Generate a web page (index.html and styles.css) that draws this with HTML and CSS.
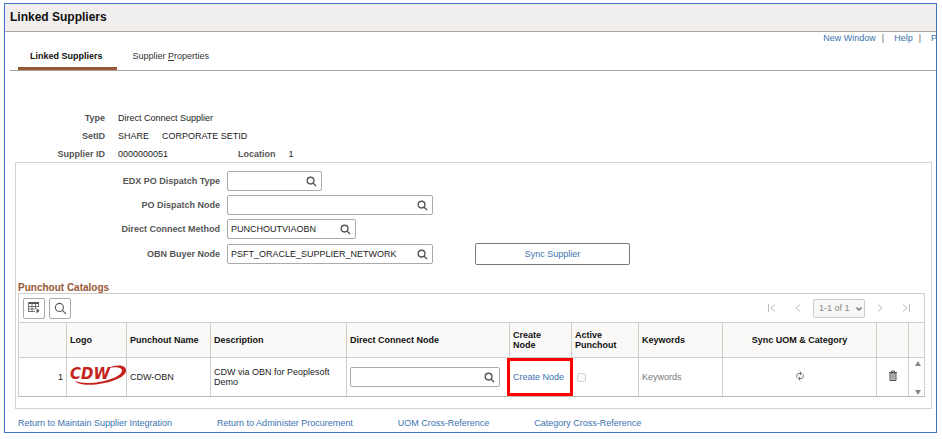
FILE: index.html
```html
<!DOCTYPE html>
<html lang="en">
<head>
<meta charset="utf-8">
<title>Linked Suppliers</title>
<link rel="stylesheet" href="styles.css">
</head>
<body>
<svg class="defs" aria-hidden="true">
  <symbol id="lens" viewBox="0 0 12 12"><circle cx="5" cy="5" r="3.7"/><path d="M7.8 7.8 L11 11"/></symbol>
</svg>
<div class="frame">
  <header class="titlebar"><h1>Linked Suppliers</h1></header>
  <nav class="utility">
    <a href="#">New Window</a><span class="bar">|</span><a href="#">Help</a><span class="bar">|</span><a href="#" class="cut">P</a>
  </nav>
  <nav class="tabs">
    <a href="#" class="tab active">Linked Suppliers</a>
    <a href="#" class="tab">Supplier <u>P</u>roperties</a>
  </nav>

  <dl class="summary">
    <dt>Type</dt><dd>Direct Connect Supplier</dd>
    <dt>SetID</dt><dd><span>SHARE</span><span>CORPORATE SETID</span></dd>
    <dt>Supplier ID</dt><dd><span class="id">0000000051</span><b>Location</b><span>1</span></dd>
  </dl>

  <section class="panel">
    <form class="fields">
      <label for="edx">EDX PO Dispatch Type</label>
      <div class="lookup w-s"><input id="edx" type="text"><button type="button" aria-label="Look up"><svg class="lens"><use href="#lens"/></svg></button></div>
      <label for="pon">PO Dispatch Node</label>
      <div class="lookup w-l"><input id="pon" type="text"><button type="button" aria-label="Look up"><svg class="lens"><use href="#lens"/></svg></button></div>
      <label for="dcm">Direct Connect Method</label>
      <div class="lookup w-m"><input id="dcm" type="text" value="PUNCHOUTVIAOBN"><button type="button" aria-label="Look up"><svg class="lens"><use href="#lens"/></svg></button></div>
      <label for="obn">OBN Buyer Node</label>
      <div class="pair">
        <div class="lookup w-l"><input id="obn" type="text" value="PSFT_ORACLE_SUPPLIER_NETWORK"><button type="button" aria-label="Look up"><svg class="lens"><use href="#lens"/></svg></button></div>
        <button type="button" class="sync">Sync Supplier</button>
      </div>
    </form>

    <h2>Punchout Catalogs</h2>
    <div class="grid">
      <div class="toolbar">
        <button type="button" class="tool" aria-label="Grid actions"><svg width="12" height="12" viewBox="0 0 12 12" fill="none" stroke="#555"><path d="M0.5 1H11" stroke-width="2"/><path d="M.5 4.5H10.500M.5 7H7M.5 9.500H7M.5 1V10M4 2V10M7.500 2V7M10.500 1V5" stroke-width=".8"/><path d="M8.500 6V11.500L11.500 8.700Z" fill="#555" stroke="none"/></svg></button>
        <button type="button" class="tool" aria-label="Find"><svg class="lens big"><use href="#lens"/></svg></button>
        <div class="pager">
          <button type="button" aria-label="First" disabled><svg width="10" height="10" viewBox="0 0 10 10"><path d="M1.5 1V9M8 1.5L4 5L8 8.5"/></svg></button>
          <button type="button" aria-label="Previous" disabled><svg width="10" height="10" viewBox="0 0 10 10"><path d="M7 1.5L3 5L7 8.5"/></svg></button>
          <span class="range"><select aria-label="Rows" disabled><option>1-1 of 1</option></select><svg width="8" height="8" viewBox="0 0 8 8"><path d="M1.5 2.5L4 5L6.500 2.5"/></svg></span>
          <button type="button" aria-label="Next" disabled><svg width="10" height="10" viewBox="0 0 10 10"><path d="M3 1.5L7 5L3 8.500"/></svg></button>
          <button type="button" aria-label="Last" disabled><svg width="10" height="10" viewBox="0 0 10 10"><path d="M8.500 1V9M2 1.500L6 5L2 8.500"/></svg></button>
        </div>
      </div>
      <table>
        <colgroup><col class="c-num"><col class="c-logo"><col class="c-name"><col class="c-desc"><col><col class="c-create"><col class="c-active"><col class="c-key"><col class="c-sync"><col class="c-del"><col class="c-scroll"></colgroup>
        <thead>
          <tr><th></th><th>Logo</th><th>Punchout Name</th><th>Description</th><th>Direct Connect Node</th><th>Create<br>Node</th><th>Active<br>Punchout</th><th>Keywords</th><th class="mid">Sync UOM &amp; Category</th><th></th><th></th></tr>
        </thead>
        <tbody>
          <tr>
            <td class="num">1</td>
            <td class="logo"><svg width="58" height="22" viewBox="0 0 58 22" role="img" aria-label="CDW"><text x="1" y="13">CDW</text><path d="M40 2C48 -2 57.500 -1 57 5C56.500 11 43 16.500 27 18.500C17 19.500 8 18.500 6 14.500C11 17.500 22 17.500 30 16C42 14 53 9.500 53 4.500C53 1 46 .5 40 2Z"/></svg></td>
            <td>CDW-OBN</td>
            <td>CDW via OBN for Peoplesoft Demo</td>
            <td><div class="lookup"><input type="text" aria-label="Direct Connect Node"><button type="button" aria-label="Look up"><svg class="lens"><use href="#lens"/></svg></button></div></td>
            <td class="marked"><a href="#">Create Node</a></td>
            <td><input type="checkbox" aria-label="Active Punchout" disabled></td>
            <td class="muted">Keywords</td>
            <td class="mid"><button type="button" class="icon" aria-label="Sync"><svg width="10" height="10" viewBox="0 0 10 10" fill="none" stroke="#777"><path d="M1.700 6.500V4.500Q1.700 2.500 4 2.500H6M8.300 3.500V5.500Q8.300 7.500 6 7.500H4"/><path d="M5 .5L7.500 2.500L5 4.500ZM5 5.500L2.500 7.500L5 9.500Z" fill="#777" stroke="none"/></svg></button></td>
            <td class="mid"><button type="button" class="icon" aria-label="Delete row"><svg width="10" height="12" viewBox="0 0 10 12" fill="none" stroke="#555"><path d="M2 3H8V10.500H2Z" fill="#ccc"/><path d="M1 2.500H9M3.500 2V1H6.500V2"/><path d="M4 4V9.500M6 4V9.500" stroke="#888"/></svg></button></td>
            <td class="scroll"><svg width="8" height="36" viewBox="0 0 8 36"><path d="M4 2L7 7H1ZM4 36L7 31H1Z" fill="#888"/></svg></td>
          </tr>
        </tbody>
      </table>
    </div>
  </section>

  <footer class="links">
    <a href="#">Return to Maintain Supplier Integration</a>
    <a href="#">Return to Administer Procurement</a>
    <a href="#">UOM Cross-Reference</a>
    <a href="#">Category Cross-Reference</a>
  </footer>
</div>
</body>
</html>
```
FILE: styles.css
```css
* { box-sizing: border-box; }
body {
  margin: 3px 5px 6px 4px;
  background: #fff;
  color: #222;
  font: 9px/12px "Liberation Sans", Arial, sans-serif;
}
a { color: #3b73af; text-decoration: none; }
button, input, select { font: inherit; color: inherit; margin: 0; padding: 0; }
.defs { display: none; }
.frame { border: 1px solid #4472c4; overflow: hidden; }

.titlebar { background: #f0efee; border-bottom: 1px solid #a8a5a2; padding: 5px; }
h1 { margin: 0; font-size: 12px; line-height: 17px; color: #111; }

.utility { display: flex; justify-content: flex-end; height: 13px; }
.bar { margin: 0 10px 0 6px; color: #666; }
.cut { width: 5px; overflow: hidden; }

.tabs { display: flex; margin-left: 5px; padding-left: 8px; border-bottom: 1px solid #a8a5a2; }
.tab { padding: 5px 14px 5px 12px; border-bottom: 3px solid transparent; color: #333; margin-right: 4px; }
.tab.active { font-weight: bold; color: #111; border-color: #985735; }

.summary {
  display: grid;
  grid-template-columns: 100px 1fr;
  gap: 6px 13px;
  margin: 41px 0 2px;
}
.summary dt { text-align: right; font-weight: bold; color: #555; }
.summary dd { margin: 0; display: flex; gap: 13px; }
.summary b { color: #555; }
.summary .id { width: 107px; }

.panel { margin: 0 4px 0 10px; padding: 8px 6px 11px 2px; border: 1px solid #d4d3d1; }
.fields {
  display: grid;
  grid-template-columns: 202px 1fr;
  gap: 4px 7px;
  align-items: center;
}
.fields label { text-align: right; font-weight: bold; color: #555; }
.lookup { display: flex; align-items: center; height: 20px; border: 1px solid #aaa; border-radius: 2px; background: #fff; }
.lookup input { flex: 1; min-width: 0; border: 0; padding: 0 3px; background: none; color: #222; }
.lookup button { display: flex; border: 0; background: none; margin-right: 4px; }
.w-s { width: 95px; }
.w-m { width: 129px; }
.w-l { width: 206px; }
.pair { display: flex; align-items: center; gap: 42px; }
.sync { width: 155px; height: 22px; border: 1px solid #777; border-radius: 2px; background: #fff; color: #3b73af; }
.lens { width: 11px; height: 11px; fill: none; stroke: #555; stroke-width: 1.500; }
.lens.big { width: 13px; height: 13px; stroke-width: 1; }

h2 { margin: 17px 0 0; font-size: 10px; line-height: 11px; color: #985735; }
.grid { border: 1px solid #d0cecb; border-bottom: 0; }
.toolbar { display: flex; align-items: center; gap: 4px; height: 28px; padding: 0 4px; }
.tool { display: flex; align-items: center; justify-content: center; width: 22px; height: 21px; border: 1px solid #aaa; border-radius: 2px; background: #fff; }
.pager { display: flex; align-items: center; gap: 10px; margin-left: auto; padding-right: 9px; }
.pager button { display: flex; border: 0; background: none; }
.pager button + button { margin-left: 6px; }
.pager svg { fill: none; stroke: #bbb; }
.range { position: relative; display: flex; }
.range select { appearance: none; width: 52px; height: 19px; padding: 0 5px; border: 1px solid #ccc; border-radius: 2px; background: #f7f7f6; color: #888; opacity: 1; }
.range svg { position: absolute; right: 2px; top: 6px; stroke: #777; stroke-width: 1.500; }

table { width: 100%; table-layout: fixed; border-collapse: separate; border-spacing: 0; }
th, td { padding: 0 3px; border-right: 1px solid #d0cecb; text-align: left; vertical-align: middle; line-height: 10px; }
th:last-child, td:last-child { border-right: 0; }
th { height: 36px; background: #faf9f8; color: #111; border-top: 1px solid #d0cecb; border-bottom: 1px solid #d0cecb; }
td { height: 39px; border-bottom: 1px solid #bdb9b5; }
.c-num { width: 48px; }
.c-logo { width: 60px; }
.c-name { width: 84px; }
.c-desc { width: 136px; }
.c-create { width: 62px; }
.c-active { width: 67px; }
.c-key { width: 84px; }
.c-sync { width: 154px; }
.c-del { width: 32px; }
.c-scroll { width: 15px; }
.num { text-align: right; }
.mid { text-align: center; }
.muted { color: #777; }
td.logo { padding: 0 0 0 2px; }
.logo svg { display: block; overflow: visible; fill: #c5221c; }
.logo text { font: italic bold 15px "DejaVu Sans", sans-serif; }
td .lookup { margin-right: 6px; }
td input[type="checkbox"] { display: block; width: 9px; height: 9px; margin: 0 2px; }
.icon { border: 0; background: none; }
.icon svg { display: block; }
.marked { position: relative; white-space: nowrap; }
.marked::after { content: ""; position: absolute; inset: 0 -2px 0 -3px; border: 3px solid #f00; z-index: 1; }
td.scroll { padding: 0 0 0 5px; }
.scroll svg { display: block; }

.links { display: flex; gap: 45px; padding: 8px 13px 3px; }
```
